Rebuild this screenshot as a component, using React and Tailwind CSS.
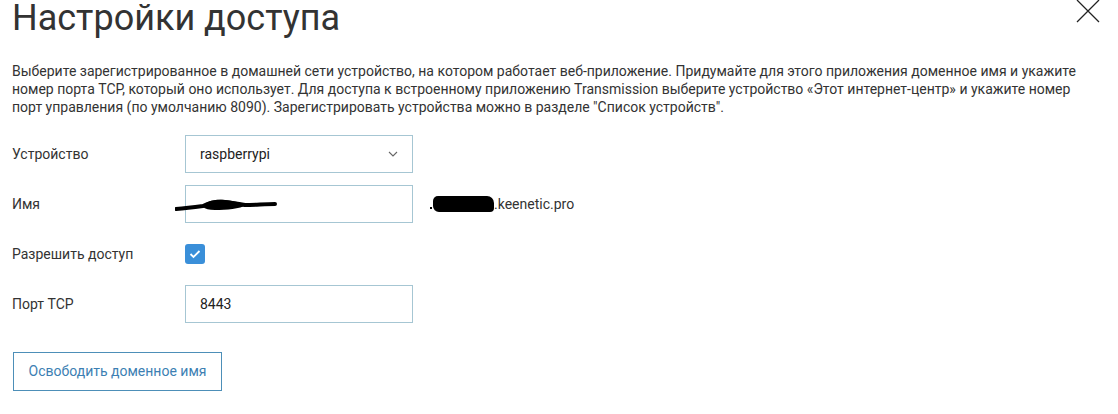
import React from "react";

const Field = ({ label, children }) => (
    <>
        <span className="text-[14px] text-[#333]">{label}</span>
        <div className="flex items-center h-[38px]">{children}</div>
    </>
);

const App = () => {
    return (
        <div className="relative w-[1118px] h-[414px] bg-white text-[#333] font-['Roboto','Liberation_Sans',sans-serif] overflow-hidden">
            <div className="flex justify-between items-start pl-3 pr-[17px]">
                <h1 className="text-[36px] leading-[36px] font-normal text-[#333]">
                    Настройки доступа
                </h1>
                <svg width="26" height="26" viewBox="0 0 26 26" className="mt-[-2px]">
                    <path d="M2 2 L24 24 M24 2 L2 24" stroke="#222" strokeWidth="1.3" />
                </svg>
            </div>

            <p className="mt-[26px] pl-3 pr-8 text-[14px] leading-[18px] text-[#333]">
                Выберите зарегистрированное в домашней сети устройство, на котором работает веб-приложение. Придумайте для этого приложения доменное имя и укажите номер порта TCP, который оно использует. Для доступа к встроенному приложению Transmission выберите устройство «Этот интернет-центр» и укажите номер порт управления (по умолчанию 8090). Зарегистрировать устройства можно в разделе "Список устройств".
            </p>

            <div className="grid grid-cols-[173px_1fr] items-center gap-y-3 pl-3 mt-[19px]">
                <Field label="Устройство">
                    <div className="flex items-center justify-between w-[228px] h-[38px] border border-[#a6c6d3] pl-[14px] pr-[14px] text-[14px] text-[#222]">
                        <span>raspberrypi</span>
                        <svg width="10" height="6" viewBox="0 0 10 6">
                            <path d="M1 1 L5 5 L9 1" fill="none" stroke="#666" strokeWidth="1.1" />
                        </svg>
                    </div>
                </Field>

                <Field label="Имя">
                    <div className="relative w-[228px] h-[38px] border border-[#a6c6d3]">
                        <svg width="104" height="18" viewBox="0 0 104 18" className="absolute left-[-11px] top-[10px]">
                            <path
                                d="M1 13 C12 12 20 11 28 10 C34 7 40 5 50 6 C58 7 64 8 70 9 C80 9 90 8 100 8"
                                fill="none"
                                stroke="#000"
                                strokeWidth="4"
                                strokeLinecap="round"
                            />
                            <path
                                d="M28 11 C30 5 40 3 50 4 C58 5 64 6 72 9 C64 13 52 14 40 14 C34 14 30 13 28 11 Z"
                                fill="#000"
                            />
                        </svg>
                    </div>
                    <span className="ml-[17px] flex items-center text-[14px] text-[#333]">
                        <span className="inline-block w-[2px] h-[2px] bg-black mt-[8px] mr-[1px]" />
                        <span className="inline-block w-[61px] h-[16px] bg-black rounded-[5px_7px_4px_6px]" />
                        .keenetic.pro
                    </span>
                </Field>

                <Field label="Разрешить доступ">
                    <span className="flex items-center justify-center w-5 h-5 rounded-[3px] bg-[#3a8fd9]">
                        <svg width="12" height="10" viewBox="0 0 12 10">
                            <path d="M1.5 5 L4.5 8 L10.5 2" fill="none" stroke="#fff" strokeWidth="1.8" />
                        </svg>
                    </span>
                </Field>

                <Field label="Порт TCP">
                    <div className="flex items-center w-[228px] h-[38px] border border-[#a6c6d3] pl-[14px] text-[14px] text-[#222]">
                        8443
                    </div>
                </Field>
            </div>

            <button className="ml-[13px] mt-[29px] h-[39px] w-[209px] border border-[#4d8fb8] text-[14px] text-[#3d7fb3] bg-white">
                Освободить доменное имя
            </button>
        </div>
    );
};

export default App;
